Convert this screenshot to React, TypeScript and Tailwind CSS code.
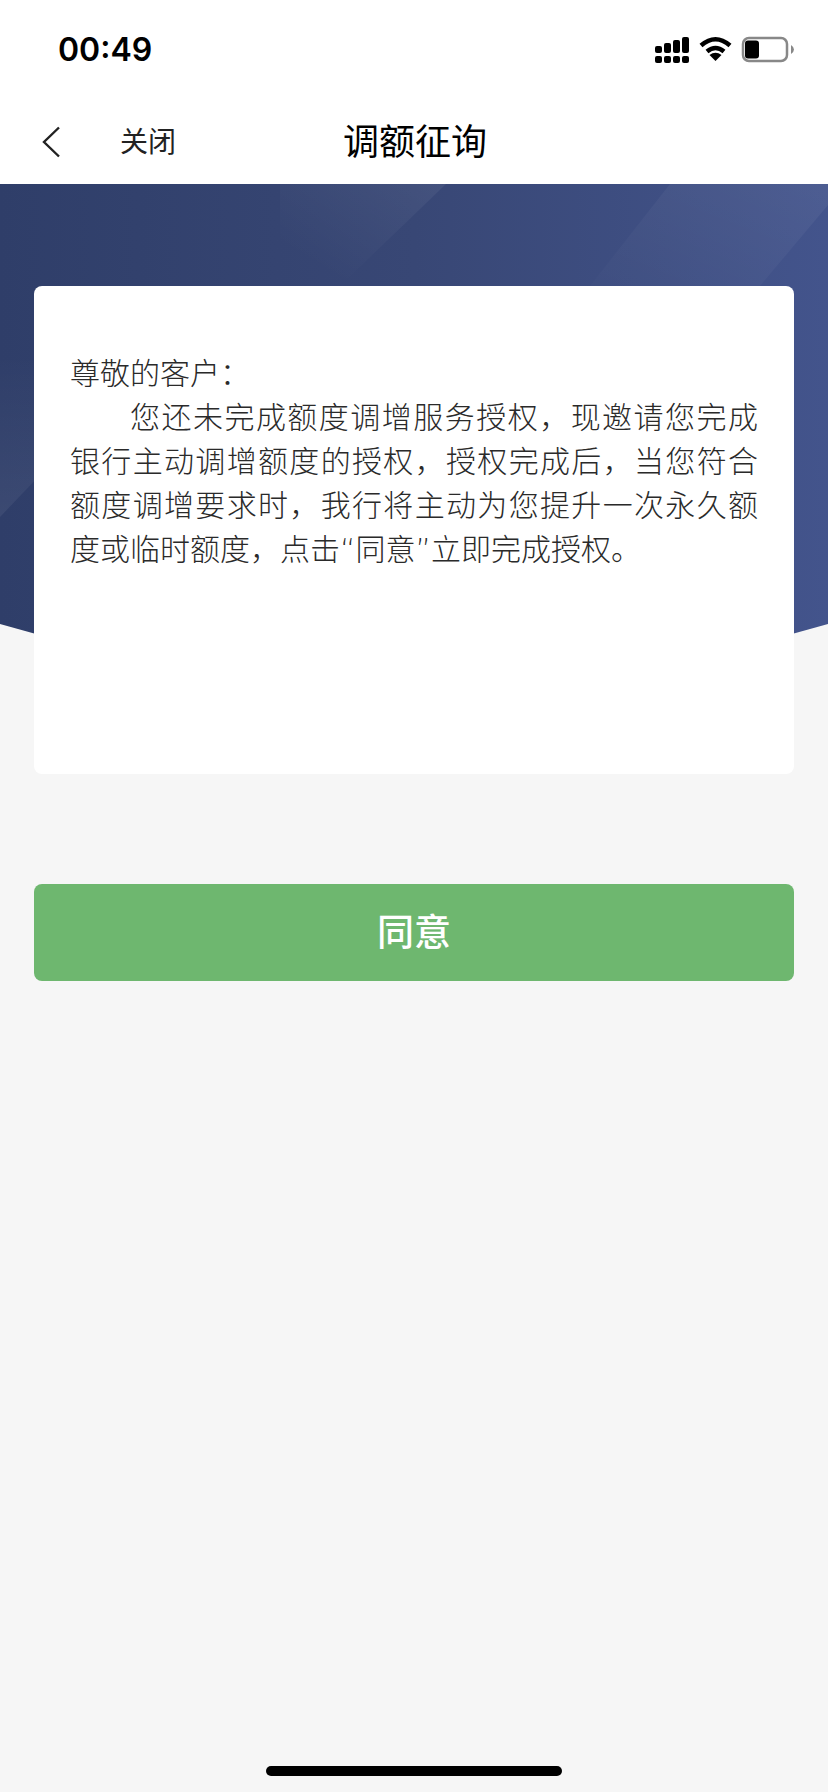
export default function App() {
  return (
    <div lang="zh-CN" className="w-[828px] h-[1792px] bg-[#f6f6f6] flex flex-col font-['Liberation_Sans','Noto_Sans_CJK_SC',sans-serif]">
      <header className="bg-white h-[184px] shrink-0 flex flex-col">
        <div className="h-[100px] flex items-start justify-between pl-[58px] pr-[34px] pt-[31px]">
          <span className="font-['Inter',sans-serif] font-semibold text-[32px] leading-[38px] text-black">00:49</span>
          <svg width="140" height="30" viewBox="0 0 140 30" className="mt-[5px]">
            <g fill="#000">
              <rect x="1" y="10" width="7" height="7" rx="2" />
              <rect x="10" y="7" width="7" height="10" rx="2" />
              <rect x="19" y="4" width="7" height="13" rx="2" />
              <rect x="28" y="1" width="7" height="16" rx="2" />
              <rect x="1" y="20" width="7" height="7" rx="2" />
              <rect x="10" y="20" width="7" height="7" rx="2" />
              <rect x="19" y="20" width="7" height="7" rx="2" />
              <rect x="28" y="20" width="7" height="7" rx="2" />
            </g>
            <g fill="none" stroke="#000" strokeWidth="4.5">
              <path d="M47 9.500 Q61.500 -3 76 9.500" />
              <path d="M53 15.500 Q61.500 8.500 70 15.500" />
            </g>
            <path d="M61.500 25 L55.500 19 Q61.500 14.500 67.500 19 Z" fill="#000" />
            <rect x="89" y="2" width="44" height="23" rx="6" fill="none" stroke="#888888" strokeWidth="2.500" />
            <rect x="91" y="4.500" width="14" height="18" rx="3" fill="#000" />
            <path d="M137 9 Q140 11 140 13.500 Q140 16 137 18 Z" fill="#888888" />
          </svg>
        </div>
        <nav className="relative h-[84px] flex items-start pl-[42px] pt-[27px] text-[#111]">
          <svg width="20" height="32" viewBox="0 0 20 32" className="shrink-0 -mt-[1px]">
            <path d="M17 1.500 L2 16 L17 30.500" fill="none" stroke="#222" strokeWidth="2.400" />
          </svg>
          <span className="ml-[58px] text-[28px] leading-[32px] text-[#222] w-[56px] whitespace-nowrap">关闭</span>
          <h1 className="ml-[167px] text-[36px] leading-[32px] font-normal text-black whitespace-nowrap">调额征询</h1>
        </nav>
      </header>

      <main className="relative flex-1 flex flex-col px-[34px] pt-[102px]">
        <svg className="absolute left-0 top-0" width="828" height="510" viewBox="0 0 828 510">
          <defs>
            <linearGradient id="base" x1="0" y1="0" x2="1" y2="0">
              <stop offset="0" stopColor="#2f3e69" />
              <stop offset="0.5" stopColor="#384775" />
              <stop offset="1" stopColor="#43548c" />
            </linearGradient>
            <linearGradient id="a" x1="0" y1="1" x2="1" y2="0">
              <stop offset="0.2" stopColor="#ffffff" stopOpacity="0" />
              <stop offset="1" stopColor="#ffffff" stopOpacity="0.06" />
            </linearGradient>
            <linearGradient id="b" x1="0" y1="1" x2="1" y2="0">
              <stop offset="0" stopColor="#ffffff" stopOpacity="0.01" />
              <stop offset="1" stopColor="#ffffff" stopOpacity="0.055" />
            </linearGradient>
            <linearGradient id="c" x1="0" y1="0" x2="0" y2="1">
              <stop offset="0" stopColor="#ffffff" stopOpacity="0" />
              <stop offset="1" stopColor="#ffffff" stopOpacity="0.06" />
            </linearGradient>
          </defs>
          <path d="M0 0 H828 V440 Q414 560 0 440 Z" fill="url(#base)" />
          <path d="M280 0 H446 L340 102 H280 Z" fill="url(#a)" />
          <path d="M670 0 H828 V21 L760 102 H590 Z" fill="url(#b)" />
          <path d="M0 170 H60 V270 L0 333 Z" fill="url(#c)" />
        </svg>

        <section className="relative h-[488px] bg-white rounded-[8px] px-[36px] pt-[66px] text-[30px] leading-[44px] font-light text-[#2a2a2a] font-['DejaVu_Sans','Noto_Sans_CJK_SC',sans-serif]">
          <p>尊敬的客户：</p>
          <p className="indent-[2em] text-justify">您还未完成额度调增服务授权，现邀请您完成银行主动调增额度的授权，授权完成后，当您符合额度调增要求时，我行将主动为您提升一次永久额度或临时额度，点击“同意”立即完成授权。</p>
        </section>

        <button className="relative mt-[110px] h-[97px] shrink-0 bg-[#6eb76f] rounded-[8px] text-white text-[37px] leading-[40px] pt-[2px] font-medium">同意</button>

        <div className="mt-auto mb-[16px] mx-auto w-[296px] h-[10px] rounded-full bg-black" />
      </main>
    </div>
  );
}
